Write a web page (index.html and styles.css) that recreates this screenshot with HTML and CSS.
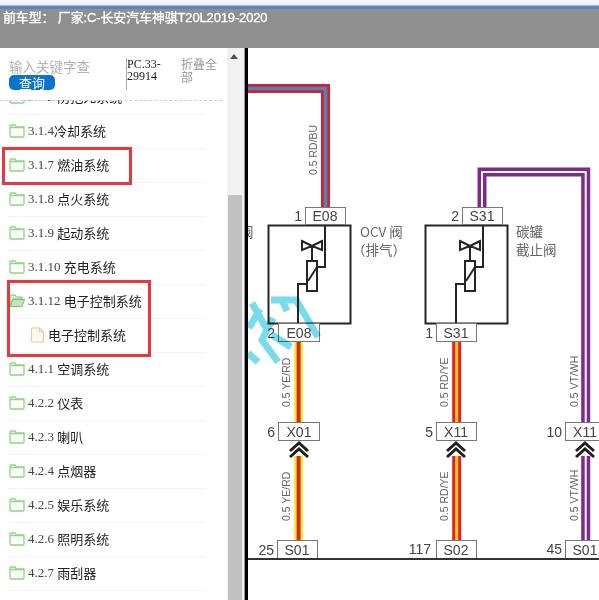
FILE: index.html
```html
<!DOCTYPE html>
<html lang="zh">
<head>
<meta charset="utf-8">
<title>电路图</title>
<link rel="stylesheet" href="styles.css">
</head>
<body>
<div class="page">
  <div class="window-edge"></div>
  <header class="topbar">前车型： 厂家:C-长安汽车神骐T20L2019-2020</header>
  <main class="main">
    <aside class="sidebar">
      <div class="tools">
        <div class="search">
          <div class="search-input">输入关键字查询</div>
          <button class="search-btn">查询</button>
        </div>
        <div class="code">PC.33-<br>29914</div>
        <div class="collapse">折叠全部</div>
      </div>
      <ul class="tree">
        <li class="row first"><svg class="ico"><use href="#folder"/></svg><span class="num">3.1.2&nbsp;</span><span>防抱死系统</span></li>
        <li class="row"><svg class="ico"><use href="#folder"/></svg><span class="num">3.1.4</span><span>冷却系统</span></li>
        <li class="row"><svg class="ico"><use href="#folder"/></svg><span class="num">3.1.7&nbsp;</span><span>燃油系统</span></li>
        <li class="row"><svg class="ico"><use href="#folder"/></svg><span class="num">3.1.8&nbsp;</span><span>点火系统</span></li>
        <li class="row"><svg class="ico"><use href="#folder"/></svg><span class="num">3.1.9&nbsp;</span><span>起动系统</span></li>
        <li class="row"><svg class="ico"><use href="#folder"/></svg><span class="num">3.1.10&nbsp;</span><span>充电系统</span></li>
        <li class="row"><svg class="ico"><use href="#folder-open"/></svg><span class="num">3.1.12&nbsp;</span><span>电子控制系统</span></li>
        <li class="row child"><svg class="ico-file" viewBox="0 0 14 16"><path d="M1.5 1h7l4 4v9a1 1 0 0 1-1 1h-10a1 1 0 0 1-1-1V2a1 1 0 0 1 1-1z M8.500 1v4h4"/></svg><span>电子控制系统</span></li>
        <li class="row"><svg class="ico"><use href="#folder"/></svg><span class="num">4.1.1&nbsp;</span><span>空调系统</span></li>
        <li class="row"><svg class="ico"><use href="#folder"/></svg><span class="num">4.2.2&nbsp;</span><span>仪表</span></li>
        <li class="row"><svg class="ico"><use href="#folder"/></svg><span class="num">4.2.3&nbsp;</span><span>喇叭</span></li>
        <li class="row"><svg class="ico"><use href="#folder"/></svg><span class="num">4.2.4&nbsp;</span><span>点烟器</span></li>
        <li class="row"><svg class="ico"><use href="#folder"/></svg><span class="num">4.2.5&nbsp;</span><span>娱乐系统</span></li>
        <li class="row"><svg class="ico"><use href="#folder"/></svg><span class="num">4.2.6&nbsp;</span><span>照明系统</span></li>
        <li class="row"><svg class="ico"><use href="#folder"/></svg><span class="num">4.2.7&nbsp;</span><span>雨刮器</span></li>
      </ul>
      <div class="mark mark-a"></div>
      <div class="mark mark-b"></div>
    </aside>
    <div class="scrollbar">
      <div class="arrow"></div>
      <div class="thumb"></div>
    </div>
    <div class="divider"></div>
    <div class="diagram">
      <svg class="wiring" viewBox="248 48 351 552" width="351" height="552">
        <!-- red / blue wire -->
        <path class="w" d="M248 88.5 H325.5 V207" stroke="#d3222c" stroke-width="9"/>
        <path class="w" d="M248 88.5 H325.5 V207" stroke="#4c84c0" stroke-width="3.5"/>
        <!-- violet wire -->
        <path class="w" d="M482 207 V172 H585.7 V422" stroke="#7d2a8c" stroke-width="9"/>
        <path class="w" d="M482 207 V172 H585.7 V422" stroke="#fff" stroke-width="2"/>
        <path class="w" d="M585.7 456 V541" stroke="#7d2a8c" stroke-width="9"/>
        <path class="w" d="M585.7 456 V541" stroke="#fff" stroke-width="2"/>
        <!-- yellow / red wire -->
        <path class="w" d="M298.6 341 V422 M298.6 456 V541" stroke="#fbe83a" stroke-width="9"/>
        <path class="w" d="M298.6 341 V422 M298.6 456 V541" stroke="#c8321c" stroke-width="4"/>
        <!-- red / yellow wire -->
        <path class="w" d="M456.7 341 V422 M456.7 456 V541" stroke="#de2426" stroke-width="9"/>
        <path class="w" d="M456.7 341 V422 M456.7 456 V541" stroke="#f8c92c" stroke-width="3"/>

        <!-- components -->
        <g class="part">
          <rect x="268.500" y="225.500" width="82" height="98"/>
          <path d="M325 225 V267 H317 M307 284 H298 V323"/>
          <rect x="307" y="261" width="10" height="30"/>
          <path d="M308 281 L317 267 M312 261 V246 M302 241 L312 246 L302 250 Z M322 241 L312 246 L322 250 Z"/>
          <rect x="425.500" y="225.500" width="82" height="98"/>
          <path d="M483 225 V267 H475 M465 284 H456 V323"/>
          <rect x="465" y="261" width="10" height="30"/>
          <path d="M466 281 L475 267 M470 261 V246 M460 241 L470 246 L460 250 Z M480 241 L470 246 L480 250 Z"/>
        </g>

        <!-- connector boxes -->
        <g class="conn">
          <rect x="305.500" y="207.500" width="40" height="17"/>
          <rect x="278.500" y="323.500" width="41" height="18"/>
          <rect x="462.500" y="207.500" width="40" height="17"/>
          <rect x="436.500" y="323.500" width="40" height="18"/>
          <rect x="278.500" y="422.500" width="41" height="18"/>
          <rect x="436.500" y="422.500" width="40" height="18"/>
          <rect x="565.500" y="422.500" width="40" height="18"/>
          <rect x="277.500" y="540.500" width="40" height="18"/>
          <rect x="436.500" y="540.500" width="40" height="18"/>
          <rect x="565.500" y="540.500" width="40" height="18"/>
        </g>
        <g class="label">
          <text x="325" y="221" text-anchor="middle">E08</text>
          <text x="299" y="338" text-anchor="middle">E08</text>
          <text x="482" y="221" text-anchor="middle">S31</text>
          <text x="456" y="338" text-anchor="middle">S31</text>
          <text x="299" y="437" text-anchor="middle">X01</text>
          <text x="456" y="437" text-anchor="middle">X11</text>
          <text x="585" y="437" text-anchor="middle">X11</text>
          <text x="297" y="555" text-anchor="middle">S01</text>
          <text x="456" y="555" text-anchor="middle">S02</text>
          <text x="585" y="555" text-anchor="middle">S01</text>
          <text x="302" y="221" text-anchor="end">1</text>
          <text x="275" y="338" text-anchor="end">2</text>
          <text x="459" y="221" text-anchor="end">2</text>
          <text x="433" y="338" text-anchor="end">1</text>
          <text x="275" y="437" text-anchor="end">6</text>
          <text x="433" y="437" text-anchor="end">5</text>
          <text x="562" y="437" text-anchor="end">10</text>
          <text x="274" y="555" text-anchor="end">25</text>
          <text x="431" y="554" text-anchor="end">117</text>
          <text x="562" y="554" text-anchor="end">45</text>
        </g>

        <!-- chevrons -->
        <g class="chev">
          <path d="M290 451 L299 443 L308 451 M290 457 L299 449 L308 457"/>
          <path d="M447 451 L456 443 L465 451 M447 457 L456 449 L465 457"/>
          <path d="M576 451 L585 443 L594 451 M576 457 L585 449 L594 457"/>
        </g>

        <!-- wire labels -->
        <g class="wire-label">
          <text transform="translate(317 175) rotate(-90)">0.5 RD/BU</text>
          <text transform="translate(290 407) rotate(-90)">0.5 YE/RD</text>
          <text transform="translate(290 521) rotate(-90)">0.5 YE/RD</text>
          <text transform="translate(448 407) rotate(-90)">0.5 RD/YE</text>
          <text transform="translate(448 521) rotate(-90)">0.5 RD/YE</text>
          <text transform="translate(578 407) rotate(-90)">0.5 VT/WH</text>
          <text transform="translate(578 521) rotate(-90)">0.5 VT/WH</text>
        </g>

        <!-- component names -->
        <g class="name">
          <text x="213" y="237">截止阀</text>
          <text x="360" y="237">OCV 阀</text>
          <text x="352" y="255">（排气）</text>
          <text x="516" y="237">碳罐</text>
          <text x="516" y="255">截止阀</text>
        </g>

        <path class="ground" d="M248 559 H599"/>

        <!-- watermark, blended over the drawing -->
        <g class="water">
          <path d="M252 303 L266 328"/>
          <path d="M260 309 L249 328"/>
          <path d="M271 300 H296 L318 337"/>
          <path d="M281 298 L287 311"/>
          <path d="M273 318 L262 340 L278 362"/>
          <path d="M248 353 L258 362"/>
          <path d="M272 335 L291 347"/>
        </g>
      </svg>
    </div>
  </main>
</div>
<svg class="defs" width="0" height="0">
  <defs>
    <symbol id="folder" viewBox="0 0 16 14">
      <path d="M1 3V2a1 1 0 0 1 1-1h4l1.500 2H15v9a1 1 0 0 1-1 1H2a1 1 0 0 1-1-1z M1 3.500H15" fill="#fbfef9" stroke="#90d488" stroke-width="1.300"/>
    </symbol>
    <symbol id="folder-open" viewBox="0 0 16 14">
      <path d="M1 4V2a1 1 0 0 1 1-1h4l1.500 2H13v2H4L1 12z" fill="#dcf0d4" stroke="#7cc070"/>
      <path d="M1 12.500L4 5.500h11.500L13 12.500z" fill="#c3e4b6" stroke="#7cc070"/>
    </symbol>
  </defs>
</svg>
</body>
</html>
```
FILE: styles.css
```css
* { box-sizing: border-box; }
html, body { margin: 0; padding: 0; }
body {
  width: 599px;
  height: 600px;
  overflow: hidden;
  background: #fff;
  font-family: "Liberation Sans", "Noto Sans CJK SC", sans-serif;
}
.page { display: flex; flex-direction: column; width: 599px; height: 600px; }
.window-edge {
  height: 9px;
  background: linear-gradient(#f7f8fb 0, #eef1f8 5px, #5c82c9 6px, #5c82c9 9px);
}
.topbar {
  height: 39px;
  padding: 1px 0 0 3px;
  background: #8f8f8f;
  color: #fff;
  font-size: 13px;
  line-height: 16px;
  letter-spacing: -.15px;
  font-synthesis: none;
  -webkit-text-stroke: .3px #fff;
  white-space: nowrap;
}
.main { display: flex; flex: 1; min-height: 0; }
.sidebar { position: relative; width: 227px; background: #fff; display: flex; flex-direction: column; overflow: hidden; }
.tools { height: 52px; display: flex; padding-top: 10px; flex: none; }
.search { width: 126px; padding-left: 9px; }
.search-input {
  width: 81px;
  height: 17px;
  overflow: hidden;
  white-space: nowrap;
  color: #b3b3b3;
  font-size: 13.5px;
  line-height: 20px;
}
.search-btn {
  display: block;
  width: 46px;
  height: 15px;
  padding: 0;
  border: 0;
  border-radius: 5px;
  background: #0a73cc;
  color: #fff;
  font: 13px/15px "Noto Sans CJK SC", sans-serif;
}
.code {
  width: 55px;
  height: 32px;
  border-left: 1px solid #aaa;
  color: #222;
  font: 12px/12px "Liberation Serif", serif;
}
.collapse {
  width: 40px;
  color: #999;
  font: 12px/12.5px "Noto Sans CJK SC", sans-serif;
}
.tree {
  flex: 1;
  margin: 0;
  padding: 0 0 0 8px;
  list-style: none;
  overflow: hidden;
  position: relative;
}
.tree::before {
  content: "";
  position: absolute;
  left: 0;
  right: 5px;
  top: 0;
  border-top: 1px dashed #d0d0d0;
  z-index: 1;
}
.row {
  width: 198px;
  height: 34px;
  display: flex;
  align-items: center;
  padding-bottom: 1px;
  border-bottom: 1px solid #f3f3f3;
  color: #222;
  font: 13px/16px "Noto Sans CJK SC", sans-serif;
  white-space: nowrap;
}
.row.first { margin-top: -19px; }
.row.child { padding-left: 23px; }
.ico { flex: none; width: 16px; height: 14px; margin: 0 3px 0 1px; }
.ico-file { flex: none; width: 14px; height: 16px; margin-right: 3px; fill: #fffaf3; stroke: #f0c79a; stroke-width: 1.200; }
.num {
  color: #444;
  font: 13px/16px "Liberation Serif", serif;
}
.mark { position: absolute; border: 3px solid #e5383f; pointer-events: none; }
.mark-a { left: 2px; top: 99px; width: 130px; height: 38px; }
.mark-b { left: 7px; top: 232px; width: 144px; height: 77px; }
.scrollbar { position: relative; width: 17px; background: #f1f1f1; }
.arrow {
  margin: 6px 0 0 3px;
  width: 0;
  height: 0;
  border: 4px solid transparent;
  border-top: 0;
  border-bottom: 5px solid #505050;
}
.thumb { position: absolute; left: 1px; right: 2px; top: 147px; bottom: 0; background: #c1c1c1; }
.divider { width: 4px; border-left: 1px solid #999; background: #000; }
.diagram { width: 351px; overflow: hidden; background: #fff; }
.wiring { display: block; }
.w { fill: none; }
.water { mix-blend-mode: multiply; }
.water path { fill: none; stroke: #7adcea; stroke-width: 7; }
.part rect, .part path { fill: none; stroke: #262626; stroke-width: 2; }
.conn rect { fill: #fff; stroke: #777; stroke-width: 1; }
.label text { font: 14px "Liberation Sans", sans-serif; fill: #444; }
.chev path { fill: none; stroke: #1f1f1f; stroke-width: 3; }
.wire-label text { font: 10.500px "Liberation Sans", sans-serif; fill: #666; }
.name text { font: 13.500px "Noto Sans CJK SC", sans-serif; fill: #666; }
.ground { fill: none; stroke: #333; stroke-width: 2; }
.defs { position: absolute; }
```
